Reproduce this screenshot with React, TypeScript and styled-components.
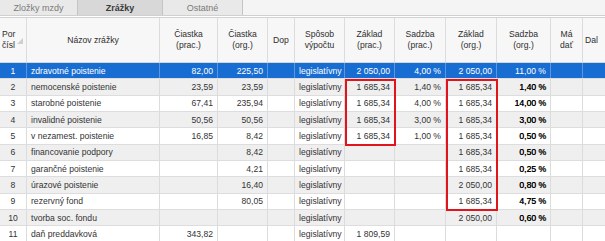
import * as React from "react";
import styled, { createGlobalStyle } from "styled-components";

const GlobalStyle = createGlobalStyle`
  html, body {
    margin: 0;
    padding: 0;
    background: #ffffff;
  }
  body {
    font-family: "Liberation Sans", Arial, sans-serif;
    font-size: 8.6px;
    color: #333;
    overflow: hidden;
  }
`;

const COLS = [27, 133, 58, 50, 27, 50, 50, 51, 51, 54, 32, 40];
const TEMPLATE = COLS.map((c) => `${c}px`).join(" ");
const colLeft = (i: number) => COLS.slice(0, i).reduce((a, b) => a + b, 0);
const ROW_H = 16.35;

const Screen = styled.div`
  width: 605px;
  height: 241px;
  overflow: hidden;
  position: relative;
`;

const TabStrip = styled.div`
  display: flex;
  height: 15px;
  background: #f4f4f4;
  border-bottom: 1px solid #d0d0d0;
`;

const Tab = styled.div<{ $active?: boolean; $w: number }>`
  width: ${(p) => p.$w}px;
  display: flex;
  align-items: center;
  justify-content: center;
  background: ${(p) => (p.$active ? "#d8d8d8" : "#e9e9e9")};
  border-right: 1px solid #c4c4c4;
  color: ${(p) => (p.$active ? "#3a3a3a" : "#7a7a7a")};
  font-weight: ${(p) => (p.$active ? "bold" : "normal")};
  font-size: 9px;
  box-sizing: border-box;
`;

const Gap = styled.div`
  height: 1px;
  background: #ffffff;
`;

const Grid = styled.div`
  position: relative;
  border-top: 1px solid #d2d2d2;
`;

const HeaderRow = styled.div`
  display: grid;
  grid-template-columns: ${TEMPLATE};
  height: 44px;
  background: #f7f7f7;
  border-bottom: 1px solid #d6d6d6;
`;

const HeadCell = styled.div<{ $left?: boolean }>`
  display: flex;
  align-items: center;
  justify-content: ${(p) => (p.$left ? "flex-start" : "center")};
  text-align: ${(p) => (p.$left ? "left" : "center")};
  padding-left: ${(p) => (p.$left ? "2px" : "0")};
  border-right: 1px solid #dcdcdc;
  line-height: 11px;
  color: #2f2f2f;
  position: relative;
  box-sizing: border-box;
`;

const SortMark = styled.span`
  position: absolute;
  left: 17px;
  top: 20px;
  width: 0;
  height: 0;
  border-left: 6px solid transparent;
  border-bottom: 6px solid #cfcfcf;
`;

const Row = styled.div<{ $kind: "sel" | "odd" | "even" }>`
  display: grid;
  grid-template-columns: ${TEMPLATE};
  height: ${ROW_H}px;
  box-sizing: border-box;
  border-bottom: 1px solid #dddddd;
  background: ${(p) =>
    p.$kind === "sel" ? "#176dd2" : p.$kind === "even" ? "#efefef" : "#ffffff"};
  color: ${(p) => (p.$kind === "sel" ? "#ffffff" : "#333")};
`;

const Cell = styled.div<{ $align?: "left" | "right" | "center"; $strong?: boolean; $sel?: boolean }>`
  display: flex;
  align-items: center;
  justify-content: ${(p) =>
    p.$align === "right" ? "flex-end" : p.$align === "center" ? "center" : "flex-start"};
  padding: 0 4px;
  border-right: 1px solid ${(p) => (p.$sel ? "#5a97df" : "#dcdcdc")};
  white-space: nowrap;
  overflow: hidden;
  box-sizing: border-box;
  color: ${(p) => (p.$sel ? "#fff" : p.$strong ? "#000" : "inherit")};
  text-shadow: ${(p) => (p.$strong ? "0.3px 0 0 #000" : "none")};
`;

const Highlight = styled.div`
  position: absolute;
  border: 2px solid #e3131b;
  box-sizing: border-box;
  pointer-events: none;
`;

type Deduction = [string, string, string, string, string, string, string, string];

const rows: Deduction[] = [
  ["zdravotné poistenie", "82,00", "225,50", "legislatívny", "2 050,00", "4,00 %", "2 050,00", "11,00 %"],
  ["nemocenské poistenie", "23,59", "23,59", "legislatívny", "1 685,34", "1,40 %", "1 685,34", "1,40 %"],
  ["starobné poistenie", "67,41", "235,94", "legislatívny", "1 685,34", "4,00 %", "1 685,34", "14,00 %"],
  ["invalidné poistenie", "50,56", "50,56", "legislatívny", "1 685,34", "3,00 %", "1 685,34", "3,00 %"],
  ["v nezamest. poistenie", "16,85", "8,42", "legislatívny", "1 685,34", "1,00 %", "1 685,34", "0,50 %"],
  ["financovanie podpory", "", "8,42", "legislatívny", "", "", "1 685,34", "0,50 %"],
  ["garančné poistenie", "", "4,21", "legislatívny", "", "", "1 685,34", "0,25 %"],
  ["úrazové poistenie", "", "16,40", "legislatívny", "", "", "2 050,00", "0,80 %"],
  ["rezervný fond", "", "80,05", "legislatívny", "", "", "1 685,34", "4,75 %"],
  ["tvorba soc. fondu", "", "", "legislatívny", "", "", "2 050,00", "0,60 %"],
  ["daň preddavková", "343,82", "", "legislatívny", "1 809,59", "", "", ""],
];

const headers: React.ReactNode[] = [
  <>Por<br />čísl</>,
  "Názov zrážky",
  <>Čiastka<br />(prac.)</>,
  <>Čiastka<br />(org.)</>,
  "Dop",
  <>Spôsob<br />výpočtu</>,
  <>Základ<br />(prac.)</>,
  <>Sadzba<br />(prac.)</>,
  <>Základ<br />(org.)</>,
  <>Sadzba<br />(org.)</>,
  <>Má<br />dať</>,
  "Dal",
];

const HEADER_TOP = 45;

const App: React.FC = () => {
  return (
    <Screen>
      <GlobalStyle />
      <TabStrip>
        <Tab $w={78}>Zložky mzdy</Tab>
        <Tab $w={85} $active>Zrážky</Tab>
        <Tab $w={80}>Ostatné</Tab>
      </TabStrip>
      <Gap />
      <Grid>
        <HeaderRow>
          {headers.map((h, i) => (
            <HeadCell key={i} $left={i === 0 || i === 11}>
              {h}
              {i === 0 && <SortMark />}
            </HeadCell>
          ))}
        </HeaderRow>
        {rows.map((r, idx) => {
          const sel = idx === 0;
          const kind = sel ? "sel" : idx % 2 === 1 ? "even" : "odd";
          return (
            <Row key={idx} $kind={kind}>
              <Cell $align="center" $sel={sel}>{idx + 1}</Cell>
              <Cell $sel={sel}>{r[0]}</Cell>
              <Cell $align="right" $sel={sel}>{r[1]}</Cell>
              <Cell $align="right" $sel={sel}>{r[2]}</Cell>
              <Cell $sel={sel} />
              <Cell $sel={sel}>{r[3]}</Cell>
              <Cell $align="right" $sel={sel}>{r[4]}</Cell>
              <Cell $align="right" $sel={sel}>{r[5]}</Cell>
              <Cell $align="right" $sel={sel}>{r[6]}</Cell>
              <Cell $align="right" $strong={!sel} $sel={sel}>{r[7]}</Cell>
              <Cell $sel={sel} />
              <Cell $sel={sel} />
            </Row>
          );
        })}
        <Highlight
          style={{
            left: colLeft(6),
            top: HEADER_TOP + ROW_H,
            width: COLS[6] + 1,
            height: ROW_H * 4 + 1,
          }}
        />
        <Highlight
          style={{
            left: colLeft(8),
            top: HEADER_TOP + ROW_H,
            width: COLS[8] + 1,
            height: ROW_H * 8 + 1,
          }}
        />
      </Grid>
    </Screen>
  );
};

export default App;
